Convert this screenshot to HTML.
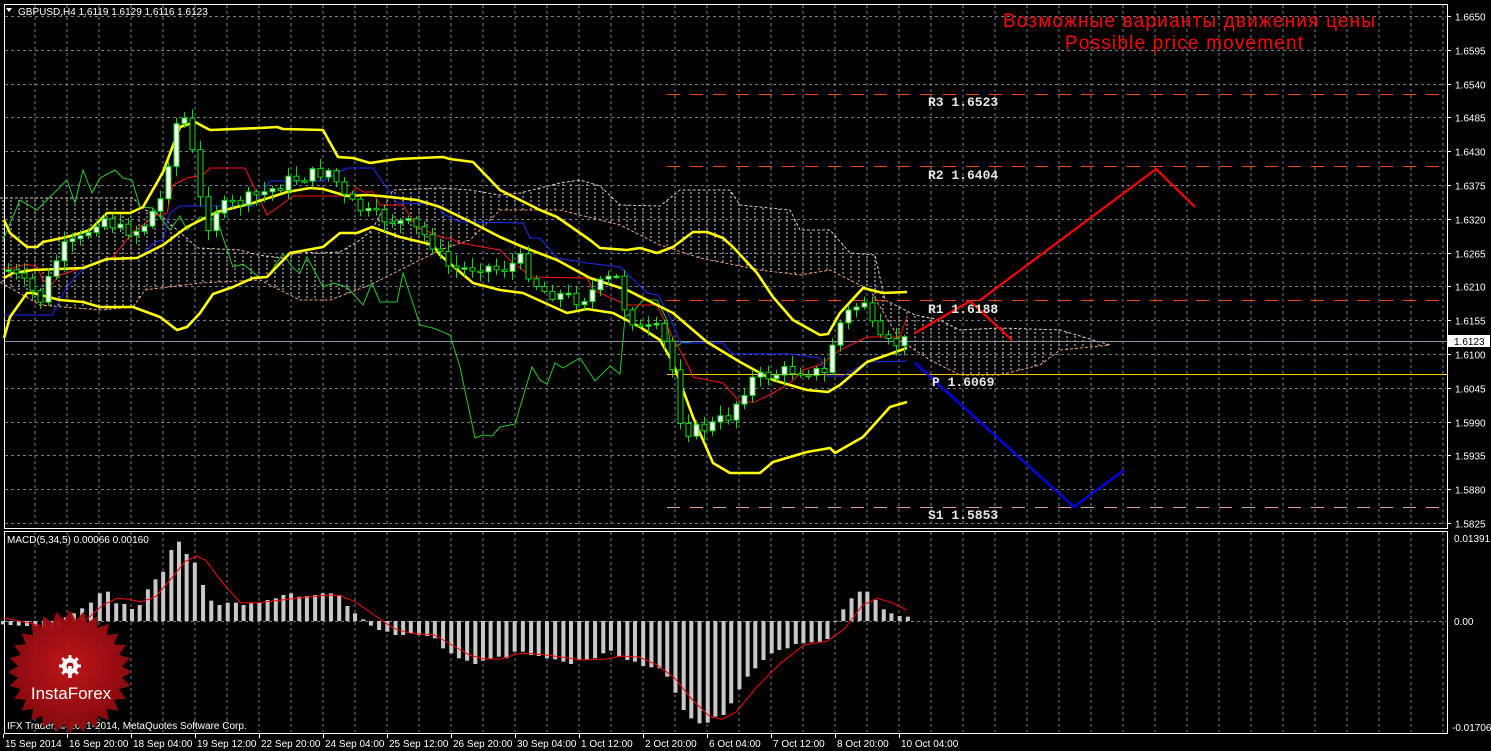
<!DOCTYPE html>
<html><head><meta charset="utf-8">
<style>
html,body{margin:0;padding:0;background:#000;}
body{width:1491px;height:751px;overflow:hidden;font-family:"Liberation Sans","DejaVu Sans",sans-serif;}
svg{display:block}
</style></head>
<body>
<svg id="s" width="1491" height="751" viewBox="0 0 1491 751" xmlns="http://www.w3.org/2000/svg" font-family="Liberation Sans, DejaVu Sans, sans-serif">
<defs>
<pattern id="hatch" width="8" height="4" patternUnits="userSpaceOnUse">
<line x1="3" y1="0" x2="3" y2="2" stroke="#d8d8d8" stroke-width="1"/>
</pattern>
<radialGradient id="rg" cx="50%" cy="45%" r="55%">
<stop offset="0" stop-color="#c8151a"/><stop offset="1" stop-color="#8a0a0e"/>
</radialGradient>
</defs>
<rect width="1491" height="751" fill="#000"/>
<g id="grid"></g>
<g id="cloud"></g>
<g id="lines"></g>
<g id="cand"></g>
<g id="macd"></g>
<g id="logo">
<polygon id="star" fill="url(#rg)" opacity="0.95"/>
<g fill="#fff" transform="translate(70,666)">
<circle cx="0" cy="0" r="8"/>
<circle cx="0" cy="0" r="3.5" fill="#a80d12"/>
<rect x="-1.8" y="0" width="3.6" height="12"/>
<rect x="-1.5" y="-11" width="3" height="5"/><rect x="-1.5" y="6" width="3" height="5" transform="rotate(180)"/>
<rect x="-1.5" y="-11" width="3" height="5" transform="rotate(45)"/>
<rect x="-1.5" y="-11" width="3" height="5" transform="rotate(-45)"/>
<rect x="-1.5" y="-11" width="3" height="5" transform="rotate(90)"/>
<rect x="-1.5" y="-11" width="3" height="5" transform="rotate(-90)"/>
<rect x="-1.5" y="-11" width="3" height="5" transform="rotate(135)"/>
<rect x="-1.5" y="-11" width="3" height="5" transform="rotate(-135)"/>
</g>
<text x="71" y="699" fill="#fff" font-size="17" text-anchor="middle">InstaForex</text>
</g>
<g id="txt"></g>
</svg>
<script>
var NS="http://www.w3.org/2000/svg";
function el(p,t,a,txt){var e=document.createElementNS(NS,t);for(var k in a)e.setAttribute(k,a[k]);if(txt!=null)e.textContent=txt;document.getElementById(p).appendChild(e);return e;}
function pts(a){var s=[];for(var i=0;i<a.length;i+=2)s.push(a[i]+","+a[i+1]);return s.join(" ");}
var G="#6e7b8b";
// grid
for(var x=35;x<1447;x+=32){el("grid","line",{x1:x,y1:5,x2:x,y2:527,stroke:G,"stroke-dasharray":"3,3"});el("grid","line",{x1:x,y1:532,x2:x,y2:732,stroke:G,"stroke-dasharray":"3,3"});}
var labs=["1.6650","1.6595","1.6540","1.6485","1.6430","1.6375","1.6320","1.6265","1.6210","1.6155","1.6100","1.6045","1.5990","1.5935","1.5880","1.5825"];
for(var k=0;k<16;k++){var y=Math.round(16+33.8*k)+0.5;el("grid","line",{x1:5,y1:y,x2:1446,y2:y,stroke:G,"stroke-dasharray":"3,3"});el("grid","line",{x1:1447,y1:y,x2:1451,y2:y,stroke:"#fff"});el("txt","text",{x:1455,y:y+4,fill:"#fff","font-size":"10"},labs[k]);}
el("grid","line",{x1:5,y1:621.5,x2:1446,y2:621.5,stroke:G,"stroke-dasharray":"3,3"});
el("grid","rect",{x:4.5,y:4.5,width:1443,height:524,fill:"none",stroke:"#fff"});
el("grid","rect",{x:4.5,y:531.5,width:1443,height:202,fill:"none",stroke:"#fff"});
// time labels
var tl=["15 Sep 2014","16 Sep 20:00","18 Sep 04:00","19 Sep 12:00","22 Sep 20:00","24 Sep 04:00","25 Sep 12:00","26 Sep 20:00","30 Sep 04:00","1 Oct 12:00","2 Oct 20:00","6 Oct 04:00","7 Oct 12:00","8 Oct 20:00","10 Oct 04:00"];
for(var i=0;i<tl.length;i++){var x=3+64*i;el("grid","line",{x1:x+.5,y1:734,x2:x+.5,y2:738,stroke:"#fff"});el("txt","text",{x:x+2,y:747,fill:"#fff","font-size":"10"},tl[i]);}
// cloud
var top_=[0,198,133,198,145,210,160,215,198,248,240,250,258,255,283,258,300,252,320,253,340,252,360,240,372,230,393,190,440,188,470,190,500,195,520,193,560,183,580,180,600,186,620,205,660,206,680,190,730,190,740,205,790,210,800,230,830,230,850,253,875,255,885,300,915,315,940,320,960,330,1000,328,1060,330,1110,345];
var bot_=[0,282,40,305,100,310,133,307,145,290,200,283,260,280,300,300,330,300,370,285,400,270,440,250,470,240,500,210,560,210,620,225,660,245,700,258,760,270,800,275,830,270,870,290,900,340,930,360,960,375,1000,375,1040,365,1060,350,1110,345];
var poly=top_.slice();for(var i=bot_.length-2;i>=0;i-=2)poly.push(bot_[i],bot_[i+1]);
el("cloud","polygon",{points:pts(poly),fill:"url(#hatch)"});
el("cloud","polyline",{points:pts(top_),fill:"none",stroke:"#e6c8b8","stroke-dasharray":"3,2"});
el("cloud","polyline",{points:pts(bot_),fill:"none",stroke:"#f4a070","stroke-dasharray":"3,2"});
// levels
el("lines","line",{x1:667,y1:94.5,x2:1447,y2:94.5,stroke:"#ff4500","stroke-dasharray":"13,10"});
el("lines","line",{x1:667,y1:166.5,x2:1447,y2:166.5,stroke:"#ff4500","stroke-dasharray":"13,10"});
el("lines","line",{x1:667,y1:300.5,x2:1447,y2:300.5,stroke:"#ff4500","stroke-dasharray":"13,10"});
el("lines","line",{x1:667,y1:507.5,x2:1447,y2:507.5,stroke:"#e0a090","stroke-dasharray":"13,10"});
el("lines","line",{x1:667,y1:374.5,x2:1447,y2:374.5,stroke:"#ffc000"});
el("lines","line",{x1:5,y1:341.5,x2:1447,y2:341.5,stroke:"#8a96a4"});
// indicator lines
var green=[3,240,20,200,37,210,50,197,67,180,75,203,83,170,92,193,100,178,115,170,123,178,132,180,140,207,153,208,170,230,180,216,187,230,200,217,217,220,233,267,243,264,260,278,267,277,283,254,293,268,300,273,307,257,323,287,333,283,347,287,363,305,372,283,380,302,397,302,403,273,420,325,433,328,450,335,460,367,475,438,483,435,492,436,500,427,515,424,532,367,540,380,547,384,555,363,563,368,580,358,595,381,610,366,620,374,625,317,633,312,643,300,657,300,667,320,670,342,677,346,683,342,693,343];
var red=[4,268,13,268,27,264,37,267,43,280,52,284,60,275,67,273,113,257,133,232,157,215,167,213,173,185,187,178,203,175,210,168,245,168,253,185,267,215,277,208,293,196,347,196,357,188,363,192,373,192,380,205,403,205,417,227,443,238,450,238,460,243,500,250,513,263,523,270,530,277,587,278,593,290,627,305,657,305,673,338,687,363,693,377,723,383,740,402,755,402,773,393,790,383,803,370,820,365,840,350,867,337,900,337,907,317];
var blue=[4,315,52,315,67,287,80,272,100,260,140,257,155,242,163,240,170,213,180,206,253,206,270,181,323,181,347,168,373,168,393,197,397,203,437,204,443,214,460,222,523,223,530,238,540,238,557,258,587,263,620,267,637,283,647,293,658,295,670,317,680,343,723,343,732,354,790,354,820,358,827,376,843,376,867,362,907,361];
el("lines","polyline",{points:pts(green),fill:"none",stroke:"#22cc22"});
el("lines","polyline",{points:pts(red),fill:"none",stroke:"#ff1010"});
el("lines","polyline",{points:pts(blue),fill:"none",stroke:"#1a2cff"});
var yU=[4,220,10,233,27,247,37,247,43,242,67,237,90,230,107,213,130,213,143,207,163,172,180,127,195,122,210,130,260,128,277,127,283,129,323,130,338,157,353,158,370,163,397,159,443,157,450,159,473,162,500,190,540,210,557,217,590,240,600,248,627,250,640,248,657,253,673,247,693,232,707,232,723,238,733,247,757,273,773,297,793,320,820,335,828,334,840,313,863,288,883,293,907,292];
var yM=[4,278,13,273,33,270,83,268,107,259,137,258,163,245,187,227,217,212,253,203,287,192,310,188,323,189,347,196,367,195,380,196,417,200,440,207,473,223,500,237,523,247,557,260,590,278,627,290,653,303,673,313,707,342,740,362,773,380,807,390,828,392,840,385,867,362,907,348];
var yL=[4,338,10,317,27,293,33,293,60,300,83,302,100,307,133,307,160,317,177,330,187,327,200,313,213,294,233,287,253,278,267,277,290,253,323,247,340,233,357,233,372,227,400,237,433,245,440,255,473,283,500,290,523,293,567,313,587,309,613,313,640,327,660,340,673,363,693,417,713,463,730,473,760,473,773,462,807,452,830,448,835,453,863,437,890,407,907,402];
[yU,yM,yL].forEach(function(a){el("lines","polyline",{points:pts(a),fill:"none",stroke:"#ffff00","stroke-width":"2.6","stroke-linejoin":"round"});});
// candles
var path=[8,270,20,280,40,300,60,250,80,240,100,215,120,230,140,230,160,200,170,150,178,115,186,120,195,170,205,230,215,210,230,205,245,200,270,190,290,180,310,175,330,170,345,200,370,215,390,220,410,225,430,240,445,265,460,270,480,265,500,270,520,260,540,290,560,295,580,300,600,285,615,275,625,310,640,330,660,330,672,370,682,430,697,430,712,425,730,415,740,395,750,380,770,375,790,370,810,370,825,375,835,330,850,310,865,300,875,340,890,345,905,341];
function P(x){for(var i=0;i<path.length-2;i+=2){if(x<=path[i+2]){var t=(x-path[i])/(path[i+2]-path[i]);return path[i+1]+t*(path[i+3]-path[i+1]);}}return path[path.length-1];}
var seed=7;function R(){seed=(seed*9301+49297)%233280;return seed/233280;}
var prev=P(8);
for(var x=8;x<=904;x+=8){var c=P(x)+(R()-0.5)*14;var o=prev;var hi=Math.min(o,c)-2-R()*9,lo=Math.max(o,c)+2+R()*9;
el("cand","line",{x1:x+.5,y1:hi,x2:x+.5,y2:lo,stroke:"#00e000"});
var t=Math.min(o,c),h=Math.max(Math.abs(o-c),1.5);
el("cand","rect",{x:x-2,y:t,width:5,height:h,fill:(c<o?"#fff":"#000"),stroke:"#00e000"});prev=c;}
// projections
el("lines","polyline",{points:"915,333 970,301 1012,340",fill:"none",stroke:"#ff0000","stroke-width":"2.2"});
el("lines","polyline",{points:"979,301 1156,169 1195,207",fill:"none",stroke:"#ff0000","stroke-width":"2.2"});
el("lines","polyline",{points:"915,363 1074,507 1124,470",fill:"none",stroke:"#0000ff","stroke-width":"2.2"});
// level labels
var ll=[["R3 1.6523",106],["R2 1.6404",179],["R1 1.6188",313],["P 1.6069",386],["S1 1.5853",519]];
ll.forEach(function(l){el("txt","text",{x:(l[0][0]=="P"?932:928),y:l[1],fill:"#e8e8e8","font-size":"13","font-family":"Liberation Mono, monospace","font-weight":"bold"},l[0]);});
el("txt","text",{x:1189,y:27,fill:"#ff0000","font-size":"19","text-anchor":"middle",textLength:"372"},"Возможные варианты движения цены");
el("txt","text",{x:1184,y:49,fill:"#ff0000","font-size":"19","text-anchor":"middle",textLength:"238"},"Possible price movement");
// price tag
el("txt","rect",{x:1448,y:335,width:42,height:12,fill:"#fff"});
el("txt","text",{x:1454,y:345,fill:"#000","font-size":"10"},"1.6123");
el("txt","text",{x:1454,y:542,fill:"#fff","font-size":"10"},"0.01391");
el("txt","text",{x:1454,y:625,fill:"#fff","font-size":"10"},"0.00");
el("txt","text",{x:1452,y:731,fill:"#fff","font-size":"10"},"-0.01706");
el("txt","text",{x:18,y:15,fill:"#fff","font-size":"10"},"GBPUSD,H4  1.6119 1.6129 1.6116 1.6123");
el("txt","polygon",{points:"6,8 12,8 9,12",fill:"#fff"});
el("txt","text",{x:7,y:543,fill:"#fff","font-size":"10"},"MACD(5,34,5) 0.00066 0.00160");
el("txt","text",{x:7,y:729,fill:"#fff","font-size":"10"},"IFX Trader, © 2001-2014, MetaQuotes Software Corp.");
// MACD histogram
var hb=[5,283,18,285,32,287,46,288,60,290,75,295,88,300,100,290,112,262,126,250,140,235,155,218,170,190,184,185,198,220,212,222,225,237,238,225,252,178,265,148,278,125,292,60,305,35,318,72,332,98,346,165,360,212,374,225,388,218,402,218,415,225,428,220,442,218,456,210,470,205,483,195,496,190,510,200,523,198,537,195,550,190,564,190,578,195,592,228,605,250,619,268,632,287,646,300,660,305,674,315,687,315,700,310,714,315,728,318,741,325,755,355,769,370,782,385,796,392,810,402,823,392,836,385,850,380,863,385,877,365,891,365,905,375,918,378,932,385,946,388,960,395,973,402,987,390,1000,388,1014,385,1028,370,1041,362,1055,380,1069,390,1082,395,1096,408,1110,412,1124,415,1137,440,1151,488,1165,540,1178,565,1192,580,1206,578,1219,560,1233,555,1246,520,1260,478,1274,440,1287,415,1301,390,1315,370,1328,360,1342,355,1356,342,1369,340,1383,337,1397,335,1410,327,1424,272,1437,238,1451,205,1465,185,1478,185,1492,210,1506,238,1519,250,1533,258,1547,260];
for(var i=0;i<hb.length;i+=2){var x=hb[i]/1.704,y=hb[i+1]/3+530,z=621;el("macd","rect",{x:x-2,y:Math.min(y,z),width:4,height:Math.max(Math.abs(y-z),1),fill:"#c8c8c8"});}
var sg=[5,263,60,283,90,300,120,295,150,265,175,225,200,205,220,208,240,216,265,200,290,150,315,95,335,78,350,90,380,160,410,218,440,218,480,210,520,202,560,195,580,197,605,215,640,258,670,295,700,310,740,315,770,345,800,375,825,387,855,387,880,372,900,370,930,375,960,382,990,390,1030,388,1060,378,1090,382,1120,405,1150,445,1180,510,1210,560,1230,568,1255,545,1290,470,1330,400,1370,345,1410,333,1440,295,1470,225,1495,205,1520,218,1545,240];
var sp=[];for(var i=0;i<sg.length;i+=2)sp.push((sg[i]/1.704).toFixed(1),(sg[i+1]/3+530).toFixed(1));
el("macd","polyline",{points:pts(sp),fill:"none",stroke:"#ff0000"});
// starburst
var st=[],n=28;for(var i=0;i<n*2;i++){var r=i%2?52:62,a=Math.PI*i/n;st.push((70+r*Math.cos(a)).toFixed(1),(672+r*Math.sin(a)).toFixed(1));}
document.getElementById("star").setAttribute("points",pts(st));
// move logo above macd
var s=document.getElementById("s");s.appendChild(document.getElementById("logo"));
</script>
</body></html>
